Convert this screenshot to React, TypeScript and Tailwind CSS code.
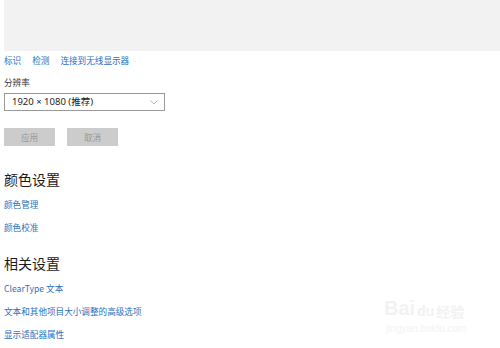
import React from "react";

const font = { fontFamily: '"Noto Sans CJK SC", "Noto Sans", sans-serif' };

export default function App() {
  const link = "text-[#2e6fbd] text-[8.6px] leading-[12px] whitespace-nowrap";
  return (
    <div className="relative w-[500px] h-[348px] bg-white overflow-hidden" style={font}>
      <div className="h-[51px] ml-[4px] bg-[#f2f2f2]" />
      <div className="pl-[4px]">
        <div className="mt-[3px] flex gap-[11px]">
          <span className={link}>标识</span>
          <span className={link}>检测</span>
          <span className={link}>连接到无线显示器</span>
        </div>
        <div className="mt-[10px] text-[8.6px] leading-[12px] text-[#333]">分辨率</div>
        <div className="mt-[5px] w-[161px] h-[18px] border border-[#999] flex items-center justify-between pl-[7px] pr-[6px]">
          <span className="text-[9.5px] text-[#222] leading-none" style={{ fontFamily: '"Noto Sans", "Noto Sans CJK SC", sans-serif' }}>
            1920 × 1080 (推荐)
          </span>
          <svg width="8" height="5" viewBox="0 0 8 5" fill="none">
            <path d="M0.5 0.5 L4 4 L7.5 0.5" stroke="#aaa" strokeWidth="0.8" />
          </svg>
        </div>
        <div className="mt-[17px] flex gap-[12px]">
          <div className="w-[51px] h-[18px] bg-[#cccccc] flex items-center justify-center text-[8.6px] text-[#999]">应用</div>
          <div className="w-[51px] h-[18px] bg-[#cccccc] flex items-center justify-center text-[8.6px] text-[#999]">取消</div>
        </div>
        <div className="mt-[23px] text-[14px] leading-[20px] text-[#1a1a1a]">颜色设置</div>
        <div className={"mt-[9px] " + link}>颜色管理</div>
        <div className={"mt-[11px] " + link}>颜色校准</div>
        <div className="mt-[20px] text-[14px] leading-[20px] text-[#1a1a1a]">相关设置</div>
        <div className={"mt-[9px] " + link}>ClearType 文本</div>
        <div className={"mt-[11px] " + link}>文本和其他项目大小调整的高级选项</div>
        <div className={"mt-[11px] " + link}>显示适配器属性</div>
      </div>
      <div className="absolute left-[384px] top-[298px] flex items-end gap-[2px] text-[#f2f2f2]">
        <span className="text-[20px] leading-none font-bold" style={{ fontFamily: '"Liberation Sans", sans-serif' }}>Bai</span>
        <span className="text-[14px] leading-none font-bold" style={{ fontFamily: '"Liberation Sans", sans-serif' }}>du</span>
        <span className="text-[14px] leading-none font-bold">经验</span>
      </div>
      <div className="absolute left-[386px] top-[324px] text-[10px] leading-none text-[#f3f3f3]" style={{ fontFamily: '"Liberation Sans", sans-serif' }}>
        jingyan.baidu.com
      </div>
    </div>
  );
}
